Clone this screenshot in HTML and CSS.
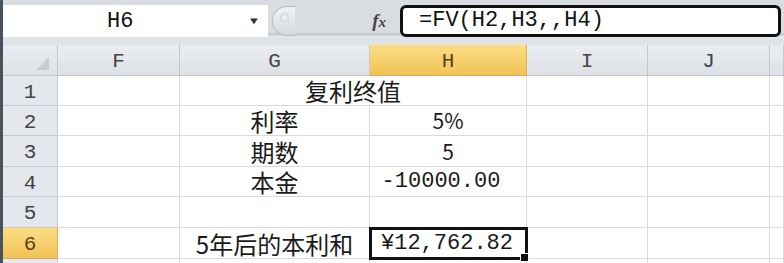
FILE: index.html
```html
<!DOCTYPE html>
<html lang="zh-CN">
  <head>
    <meta charset="UTF-8" />
    <title>复利终值</title>
    <link rel="stylesheet" href="styles.css">
  </head>
  <body>
    <div class="formula-bar">
      <div class="name-box">
        <span class="name-text">H6</span>
        <span class="drop">&#9660;</span>
      </div>
      <div class="fx-area">
        <span class="knob"></span>
        <span class="fx"><i>f</i><i class="x">x</i></span>
      </div>
      <div class="formula-input">=FV(H2,H3,,H4)</div>
    </div>

    <div class="sheet">
      <div class="hd corner"><span class="tri"></span></div>
      <div class="hd col">F</div>
      <div class="hd col">G</div>
      <div class="hd col sel">H</div>
      <div class="hd col">I</div>
      <div class="hd col">J</div>
      <div class="hd col"></div>

      <div class="hd row">1</div>
      <div class="cell"></div>
      <div class="cell span2 cjk">复利终值</div>
      <div class="cell"></div>
      <div class="cell"></div>
      <div class="cell"></div>

      <div class="hd row">2</div>
      <div class="cell"></div>
      <div class="cell cjk">利率</div>
      <div class="cell cjk num-sans">5%</div>
      <div class="cell"></div>
      <div class="cell"></div>
      <div class="cell"></div>

      <div class="hd row">3</div>
      <div class="cell"></div>
      <div class="cell cjk">期数</div>
      <div class="cell cjk num-sans">5</div>
      <div class="cell"></div>
      <div class="cell"></div>
      <div class="cell"></div>

      <div class="hd row">4</div>
      <div class="cell"></div>
      <div class="cell cjk">本金</div>
      <div class="cell mono shift">-10000.00</div>
      <div class="cell"></div>
      <div class="cell"></div>
      <div class="cell"></div>

      <div class="hd row">5</div>
      <div class="cell"></div>
      <div class="cell"></div>
      <div class="cell"></div>
      <div class="cell"></div>
      <div class="cell"></div>
      <div class="cell"></div>

      <div class="hd row sel">6</div>
      <div class="cell"></div>
      <div class="cell cjk">5年后的本利和</div>
      <div class="cell mono active">¥12,762.82</div>
      <div class="cell"></div>
      <div class="cell"></div>
      <div class="cell"></div>

      <div class="hd row"></div>
      <div class="cell"></div>
      <div class="cell"></div>
      <div class="cell"></div>
      <div class="cell"></div>
      <div class="cell"></div>
      <div class="cell"></div>
    </div>
  </body>
</html>
```

FILE: styles.css
```css
body {
  margin: 0;
  width: 784px;
  height: 263px;
  overflow: hidden;
  background: #fff;
  border-left: 3px solid #46525f;
  box-sizing: border-box;
  font-family: "Liberation Mono", monospace;
}

/* formula bar */
.formula-bar {
  display: flex;
  height: 45px;
  box-sizing: border-box;
  padding-top: 5px;
  background: linear-gradient(#d9dde2 0, #d9dde2 33px, #b9bec5 34px, #e3e6ea 36px, #dfe3e8 40px);
}
.name-box {
  width: 265px;
  height: 32px;
  background: #fff;
  display: flex;
  align-items: center;
}
.name-text {
  font-size: 22px;
  color: #111;
  margin-left: 104px;
}
.drop {
  font-size: 10px;
  color: #333;
  margin-left: 118px;
  transform: scaleX(1.3);
}
.fx-area {
  width: 132px;
  height: 32px;
  display: flex;
  align-items: center;
}
.knob {
  width: 22px;
  height: 28px;
  margin-left: 4px;
  border: 1px solid #b7bcc3;
  border-right: none;
  border-radius: 15px 0 0 15px;
  background: linear-gradient(#f1f2f4, #d5d9de);
  position: relative;
}
.knob::after {
  content: "";
  position: absolute;
  left: 7px;
  top: 6px;
  width: 9px;
  height: 9px;
  border-radius: 50%;
  background: radial-gradient(#f8f9fa, #c6cacf);
}
.fx {
  margin-left: auto;
  margin-right: 14px;
  font-family: "Liberation Serif", serif;
  font-weight: bold;
  font-size: 19px;
  color: #444;
}
.fx .x {
  font-size: 15px;
}
.formula-input {
  flex: 1;
  height: 32px;
  margin-right: 3px;
  box-sizing: border-box;
  border: 3px solid #111;
  border-radius: 6px;
  background: #fff;
  font-size: 22px;
  line-height: 26px;
  padding-left: 16px;
  color: #111;
}

/* sheet grid */
.sheet {
  display: grid;
  grid-template-columns: 55px 122px 190px 157px 121px 122px 14px;
  grid-template-rows: 31px 30px 30px 31px 30px 31px 31px 10px;
}
.hd {
  background: linear-gradient(#eaedf1, #dde1e6);
  border-right: 1px solid #c3c8cf;
  border-bottom: 1px solid #c3c8cf;
  color: #444;
  font-size: 21px;
  display: flex;
  align-items: center;
  justify-content: center;
  box-sizing: border-box;
}
.hd.col {
  padding-top: 2px;
}
.hd.row {
  background: #e4e8ed;
  padding-top: 3px;
}
.hd.sel {
  background: linear-gradient(#fadd87, #f2c354);
  border-right-color: #e2b04a;
  border-bottom-color: #e2a93c;
  color: #5b4415;
}
.corner {
  position: relative;
}
.tri {
  position: absolute;
  right: 8px;
  bottom: 5px;
  width: 0;
  height: 0;
  border-left: 13px solid transparent;
  border-bottom: 13px solid #c9cdd3;
}
.cell {
  border-right: 1px solid #d8dadd;
  border-bottom: 1px solid #d8dadd;
  box-sizing: border-box;
  display: flex;
  align-items: flex-end;
  justify-content: center;
  color: #1a1a1a;
  font-size: 22px;
  padding-bottom: 2px;
}
.span2 {
  grid-column: span 2;
}
.cjk {
  font-family: "Noto Sans CJK SC", "Noto Sans", sans-serif;
  font-size: 24px;
  line-height: 25px;
}
.num-sans {
  font-size: 21px;
}
.mono {
  font-family: "Liberation Mono", monospace;
  line-height: 24px;
}
.shift {
  padding-right: 14px;
}
.active {
  position: relative;
  outline: 3px solid #111;
  outline-offset: -2px;
  justify-content: flex-start;
  padding-left: 11px;
}
.active::after {
  content: "";
  position: absolute;
  right: -3px;
  bottom: -4px;
  width: 7px;
  height: 7px;
  background: #111;
  border: 1px solid #fff;
}
```
